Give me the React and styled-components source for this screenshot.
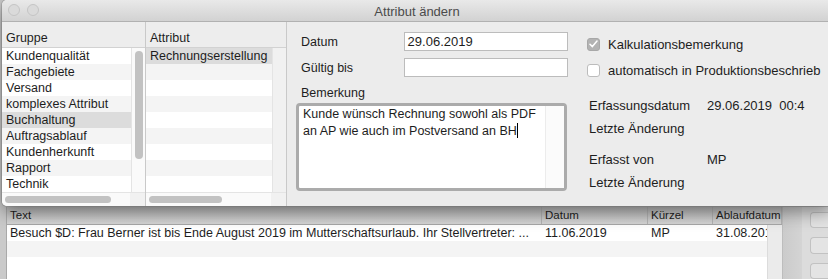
import React from 'react';
import styled, { createGlobalStyle } from 'styled-components';

const FONT = `"Liberation Sans", Arial, sans-serif`;

const GlobalStyle = createGlobalStyle`
  html, body {
    margin: 0;
    padding: 0;
    background: #c9c9c9;
  }
  body {
    font-family: ${FONT};
    font-size: 12.5px;
    color: #1d1d1d;
  }
`;

const groups = [
  'Kundenqualität',
  'Fachgebiete',
  'Versand',
  'komplexes Attribut',
  'Buchhaltung',
  'Auftragsablauf',
  'Kundenherkunft',
  'Rapport',
  'Technik',
];

const backColumns = [
  { label: 'Text', width: 535 },
  { label: 'Datum', width: 106 },
  { label: 'Kürzel', width: 65 },
  { label: 'Ablaufdatum', width: 69 },
];

const backRows = [
  [
    'Besuch $D: Frau Berner ist bis Ende August 2019 im Mutterschaftsurlaub. Ihr Stellvertreter: ...',
    '11.06.2019',
    'MP',
    '31.08.2019',
  ],
  ['', '', '', ''],
  ['', '', '', ''],
];

export default function App() {
  return (
    <>
      <GlobalStyle />
      <Desktop>
        <BackWindow>
          <BackTable>
            <BackHeader>
              {backColumns.map((c) => (
                <BackHeadCell key={c.label} $width={c.width}>
                  {c.label}
                </BackHeadCell>
              ))}
            </BackHeader>
            <BackBody>
              <BackRows>
                {backRows.map((row, i) => (
                  <BackRow key={i} $odd={i % 2 === 1}>
                    {row.map((cell, j) => (
                      <BackCell key={j} $width={backColumns[j].width}>
                        {cell}
                      </BackCell>
                    ))}
                  </BackRow>
                ))}
              </BackRows>
              <BackRowTrack />
            </BackBody>
          </BackTable>
          <BackScroll />
          <BackButtons>
            <BackButton />
            <BackButton />
            <BackButton />
          </BackButtons>
        </BackWindow>

        <Dialog>
          <TitleBar>
            <Lights>
              <Light />
              <Light />
            </Lights>
            <Title>Attribut ändern</Title>
          </TitleBar>

          <Body>
            <ListPanel $width={143}>
              <ListHeader>Gruppe</ListHeader>
              <ListMain>
                <Rows>
                  {groups.map((g, i) => (
                    <Row key={g} $odd={i % 2 === 1} $selected={g === 'Buchhaltung'}>
                      {g}
                    </Row>
                  ))}
                </Rows>
                <VTrack>
                  <VThumb />
                </VTrack>
              </ListMain>
              <HScroll>
                <HTrack>
                  <HThumb $width={106} />
                </HTrack>
                <Corner />
              </HScroll>
            </ListPanel>

            <ListPanel $width={140}>
              <ListHeader>Attribut</ListHeader>
              <ListMain>
                <Rows>
                  {groups.map((g, i) => (
                    <Row key={g} $odd={i % 2 === 1} $selected={i === 0}>
                      {i === 0 ? 'Rechnungserstellung' : ''}
                    </Row>
                  ))}
                </Rows>
                <VTrack $empty />
              </ListMain>
              <HScroll>
                <HTrack>
                  <HThumb $width={73} />
                </HTrack>
                <Corner />
              </HScroll>
            </ListPanel>

            <FormPanel>
              <FormColumn>
                <FieldRow>
                  <FieldLabel>Datum</FieldLabel>
                  <TextInput>29.06.2019</TextInput>
                </FieldRow>
                <FieldRow>
                  <FieldLabel>Gültig bis</FieldLabel>
                  <TextInput />
                </FieldRow>
                <NoteLabel>Bemerkung</NoteLabel>
                <NoteBox>
                  <NoteText>
                    Kunde wünsch Rechnung sowohl als PDF
                    <br />
                    an AP wie auch im Postversand an BH
                    <Caret />
                  </NoteText>
                  <NoteScroll />
                </NoteBox>
              </FormColumn>

              <InfoColumn>
                <CheckRow>
                  <CheckBox $checked>
                    <svg width="9" height="8" viewBox="0 0 9 8">
                      <path d="M1 4.2 L3.4 6.6 L8 1" fill="none" stroke="#fff" strokeWidth="1.5" strokeLinecap="round" strokeLinejoin="round" />
                    </svg>
                  </CheckBox>
                  Kalkulationsbemerkung
                </CheckRow>
                <CheckRow>
                  <CheckBox />
                  automatisch in Produktionsbeschrieb
                </CheckRow>

                <InfoGroup $top={9} $bottom={15}>
                  <InfoRow>
                    <InfoLabel>Erfassungsdatum</InfoLabel>
                    <InfoValue>29.06.2019&nbsp;&nbsp;00:4</InfoValue>
                  </InfoRow>
                  <InfoRow>
                    <InfoLabel>Letzte Änderung</InfoLabel>
                  </InfoRow>
                </InfoGroup>
                <InfoGroup $top={0} $bottom={0}>
                  <InfoRow>
                    <InfoLabel>Erfasst von</InfoLabel>
                    <InfoValue>MP</InfoValue>
                  </InfoRow>
                  <InfoRow>
                    <InfoLabel>Letzte Änderung</InfoLabel>
                  </InfoRow>
                </InfoGroup>
              </InfoColumn>
            </FormPanel>
          </Body>
        </Dialog>
      </Desktop>
    </>
  );
}

const Desktop = styled.div`
  position: relative;
  width: 828px;
  height: 279px;
  overflow: hidden;
  background: #cacaca;
`;

/* background window, partly hidden under the dialog */

const BackWindow = styled.div`
  display: flex;
  height: 100%;
  padding: 207px 0 0 6px;
  box-sizing: border-box;
`;

const BackTable = styled.div`
  width: 775px;
  background: #fff;
  border-left: 1px solid #a9a9a9;
  display: flex;
  flex-direction: column;
`;

const BackHeader = styled.div`
  display: flex;
  height: 17px;
  background: linear-gradient(#bcbcbc, #d6d6d6);
  border-bottom: 1px solid #a8a8a8;
`;

const BackHeadCell = styled.div`
  width: ${(p) => p.$width}px;
  box-sizing: border-box;
  padding: 2px 0 0 3px;
  font-size: 11.5px;
  border-right: 1px solid #b4b4b4;
  white-space: nowrap;
  overflow: hidden;
`;

const BackBody = styled.div`
  flex: 1;
  display: flex;
`;

const BackRows = styled.div`
  width: 760px;
  overflow: hidden;
  display: flex;
  flex-direction: column;
`;

const BackRowTrack = styled.div`
  flex: 1;
  background: #ebebeb;
  border-left: 1px solid #dcdcdc;
`;

const BackRow = styled.div`
  display: flex;
  height: 16px;
  flex: none;
  background: ${(p) => (p.$odd ? '#f4f4f4' : '#fff')};
`;

const BackCell = styled.div`
  width: ${(p) => p.$width}px;
  flex: none;
  box-sizing: border-box;
  padding: 1px 0 0 3px;
  white-space: nowrap;
  overflow: hidden;
`;

const BackScroll = styled.div`
  width: 19px;
  background: linear-gradient(90deg, #cbcbcb, #d4d4d4);
  border-left: 1px solid #bdbdbd;
`;

const BackButtons = styled.div`
  flex: 1;
  background: #dcdcdc;
  display: flex;
  flex-direction: column;
  gap: 9px;
  padding: 5px 0 0 8px;
`;

const BackButton = styled.div`
  height: 16px;
  border: 1px solid #c2c2c2;
  border-right: none;
  border-radius: 4px 0 0 4px;
  background: #e4e4e4;
`;

/* dialog window */

const Dialog = styled.div`
  position: absolute;
  top: 0;
  left: 2px;
  width: 830px;
  height: 206px;
  display: flex;
  flex-direction: column;
  background: #ececec;
  border-radius: 5px;
  overflow: hidden;
  box-shadow: 0 6px 18px rgba(0, 0, 0, 0.42), 0 0 0 1px rgba(0, 0, 0, 0.12);
`;

const TitleBar = styled.div`
  position: relative;
  height: 22px;
  flex: none;
  display: flex;
  align-items: center;
  justify-content: center;
  background: linear-gradient(#e9e9e9, #d2d2d2);
  border-bottom: 1px solid #b1b1b1;
  box-sizing: border-box;
`;

const Lights = styled.div`
  position: absolute;
  left: 6px;
  top: 4px;
  display: flex;
  gap: 7px;
`;

const Light = styled.div`
  width: 12px;
  height: 12px;
  border-radius: 50%;
  background: #dadada;
  border: 1px solid #c4c4c4;
  box-sizing: border-box;
`;

const Title = styled.div`
  font-size: 13px;
  color: #4b4b4b;
  margin-top: 1px;
`;

const Body = styled.div`
  flex: 1;
  display: flex;
  min-height: 0;
`;

const ListPanel = styled.div`
  width: ${(p) => p.$width}px;
  flex: none;
  display: flex;
  flex-direction: column;
  border-right: 1px solid #c9c9c9;
`;

const ListHeader = styled.div`
  height: 26px;
  box-sizing: border-box;
  padding: 9px 0 0 4px;
  background: #ededed;
  border-bottom: 1px solid #d2d2d2;
`;

const ListMain = styled.div`
  display: flex;
  height: 144px;
`;

const Rows = styled.div`
  flex: 1;
  display: flex;
  flex-direction: column;
`;

const Row = styled.div`
  height: 16px;
  line-height: 16px;
  padding-left: 4px;
  white-space: nowrap;
  background: ${(p) => (p.$selected ? '#dcdcdc' : p.$odd ? '#f4f4f4' : '#fff')};
`;

const VTrack = styled.div`
  width: 14px;
  flex: none;
  background: ${(p) => (p.$empty ? '#f1f1f1' : '#fafafa')};
  border-left: 1px solid #e4e4e4;
  padding: 3px 0 0 3px;
  box-sizing: border-box;
`;

const VThumb = styled.div`
  width: 8px;
  height: 108px;
  border-radius: 4px;
  background: #c2c2c2;
`;

const HScroll = styled.div`
  flex: 1;
  display: flex;
  border-top: 1px solid #e4e4e4;
`;

const HTrack = styled.div`
  flex: 1;
  background: #fafafa;
  padding: 3px 0 0 3px;
`;

const HThumb = styled.div`
  width: ${(p) => p.$width}px;
  height: 7px;
  border-radius: 4px;
  background: #c2c2c2;
`;

const Corner = styled.div`
  width: 15px;
  background: #f1f1f1;
`;

const FormPanel = styled.div`
  flex: 1;
  display: flex;
  padding: 10px 0 0 9px;
`;

const FormColumn = styled.div`
  width: 272px;
  display: flex;
  flex-direction: column;
`;

const FieldRow = styled.div`
  display: flex;
  align-items: center;
  height: 19px;
  margin-bottom: 7px;
`;

const FieldLabel = styled.div`
  width: 108px;
  padding-left: 5px;
  box-sizing: border-box;
`;

const TextInput = styled.div`
  width: 165px;
  height: 19px;
  box-sizing: border-box;
  background: #fff;
  border: 1px solid #bcbcbc;
  padding: 1px 0 0 3px;
  font-size: 13px;
`;

const NoteLabel = styled.div`
  padding-left: 5px;
  margin-top: 2px;
  height: 17px;
`;

const NoteBox = styled.div`
  width: 271px;
  height: 88px;
  box-sizing: border-box;
  border: 3px solid #ababab;
  border-radius: 4px;
  background: #fff;
  display: flex;
`;

const NoteText = styled.div`
  flex: 1;
  padding: 0 0 0 4px;
  line-height: 17px;
  white-space: nowrap;
  overflow: hidden;
`;

const Caret = styled.span`
  display: inline-block;
  width: 1px;
  height: 15px;
  background: #000;
  vertical-align: -3px;
`;

const NoteScroll = styled.div`
  width: 18px;
  flex: none;
  border-left: 1px solid #ececec;
  background: #fbfbfb;
`;

const InfoColumn = styled.div`
  flex: 1;
  display: flex;
  flex-direction: column;
  padding: 5px 0 0 19px;
  white-space: nowrap;
  overflow: hidden;
`;

const CheckRow = styled.div`
  display: flex;
  align-items: center;
  gap: 8px;
  height: 14px;
  margin-bottom: 12px;
  font-size: 13px;
`;

const CheckBox = styled.div`
  width: 13px;
  height: 13px;
  box-sizing: border-box;
  border-radius: 3px;
  display: flex;
  align-items: center;
  justify-content: center;
  background: ${(p) => (p.$checked ? '#b3b3b3' : '#fff')};
  border: 1px solid ${(p) => (p.$checked ? '#a8a8a8' : '#bcbcbc')};
`;

const InfoGroup = styled.div`
  display: flex;
  flex-direction: column;
  gap: 7px;
  margin: ${(p) => p.$top}px 0 ${(p) => p.$bottom}px 2px;
`;

const InfoRow = styled.div`
  display: flex;
  height: 16px;
  font-size: 13px;
`;

const InfoLabel = styled.div`
  width: 118px;
`;

const InfoValue = styled.div`
  width: 99px;
  overflow: hidden;
`;
